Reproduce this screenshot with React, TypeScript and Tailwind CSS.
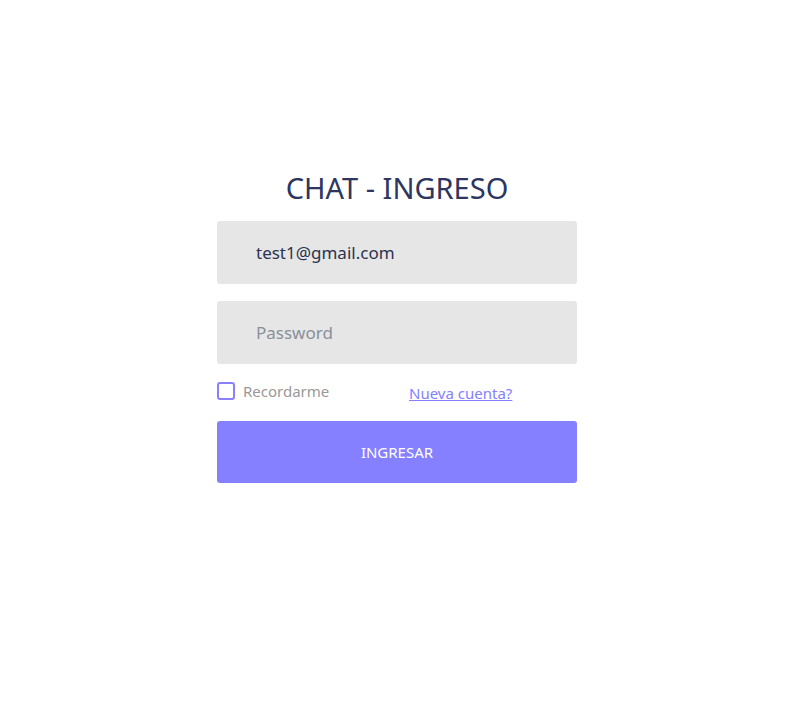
import { useState } from "react"

export default function App() {
  const [email, setEmail] = useState("test1@gmail.com")
  const [password, setPassword] = useState("")
  const [remember, setRemember] = useState(false)

  return (
    <div className="min-h-[714px] w-full bg-white flex justify-center pt-[168px] pr-[4px] font-['Segoe_UI','Noto_Sans',sans-serif]">
      <form className="w-[360px] flex flex-col" onSubmit={(e) => e.preventDefault()}>
        <h1 className="text-center text-[29px] leading-[40px] text-[#2d3561] mb-[13px]">CHAT - INGRESO</h1>

        <input
          type="email"
          value={email}
          onChange={(e) => setEmail(e.target.value)}
          className="h-[63px] w-full rounded-[3px] bg-[#e6e6e6] pl-[39px] text-[17px] text-[#2b3350] outline-none"
        />
        <input
          type="password"
          placeholder="Password"
          value={password}
          onChange={(e) => setPassword(e.target.value)}
          className="mt-[17px] h-[63px] w-full rounded-[3px] bg-[#e6e6e6] pl-[39px] text-[17px] text-[#2b3350] placeholder:text-[#8a8f99] outline-none"
        />

        <div className="mt-[16px] flex items-center h-[22px]">
          <label className="flex items-center cursor-pointer w-[192px]">
            <span
              onClick={() => setRemember(!remember)}
              className={`w-[18px] h-[18px] rounded-[3px] border-2 border-[#8a80ff] ${remember ? "bg-[#8a80ff]" : "bg-white"}`}
            />
            <span className="ml-[8px] text-[15px] text-[#999999]">Recordarme</span>
          </label>
          <a href="#" className="mt-[4px] text-[15px] text-[#8480ff] underline">Nueva cuenta?</a>
        </div>

        <button
          type="submit"
          className="mt-[19px] h-[62px] w-full rounded-[3px] bg-[#8480ff] text-white text-[15px]"
        >
          INGRESAR
        </button>
      </form>
    </div>
  )
}
